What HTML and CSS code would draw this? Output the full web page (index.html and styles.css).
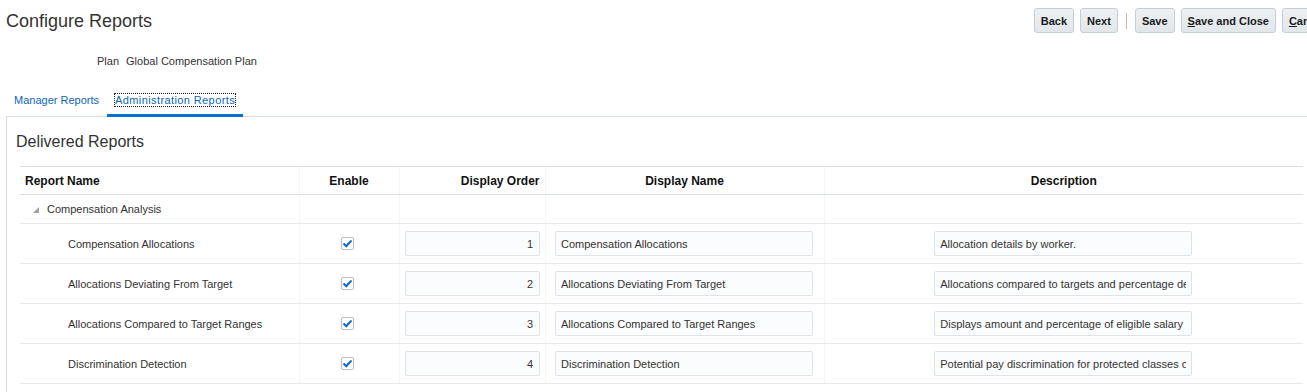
FILE: index.html
```html
<!DOCTYPE html>
<html lang="en">
<head>
    <meta charset="UTF-8">
    <title>Configure Reports</title>
    <link rel="stylesheet" href="styles.css">
</head>
<body>
    <div class="page-header">
        <h1 class="title">Configure Reports</h1>
        <div class="toolbar">
            <button class="btn">Back</button>
            <button class="btn">Next</button>
            <span class="separator"></span>
            <button class="btn">Save</button>
            <button class="btn"><u>S</u>ave and Close</button>
            <button class="btn"><u>C</u>ancel</button>
        </div>
    </div>

    <div class="plan-row">
        <span class="label">Plan</span>
        <span>Global Compensation Plan</span>
    </div>

    <div class="tabs">
        <a href="#" class="tab">Manager Reports</a>
        <a href="#" class="tab active"><span class="focus">Administration Reports</span></a>
    </div>

    <div class="panel">
        <h2 class="panel-title">Delivered Reports</h2>
        <table class="reports">
            <colgroup>
                <col class="col-name">
                <col class="col-enable">
                <col class="col-order">
                <col class="col-display">
                <col class="col-desc">
            </colgroup>
            <thead>
                <tr>
                    <th class="left">Report Name</th>
                    <th>Enable</th>
                    <th class="right">Display Order</th>
                    <th>Display Name</th>
                    <th>Description</th>
                </tr>
            </thead>
            <tbody>
                <tr class="group">
                    <td><span class="toggle"><svg width="6" height="6" viewBox="0 0 6 6"><polygon points="6,0 6,6 0,6" fill="#a0a0a0"/></svg></span>Compensation Analysis</td>
                    <td></td><td></td><td></td><td></td>
                </tr>
                <tr>
                    <td class="name">Compensation Allocations</td>
                    <td class="center"><span class="check"><svg width="11" height="11" viewBox="0 0 11 11"><polyline points="1.5,5.5 4.2,8.2 9.5,2.5" fill="none" stroke="#0b6fc8" stroke-width="2"/></svg></span></td>
                    <td class="center"><input class="field num" type="text" value="1"></td>
                    <td class="center"><input class="field" type="text" value="Compensation Allocations"></td>
                    <td class="center"><input class="field" type="text" value="Allocation details by worker."></td>
                </tr>
                <tr>
                    <td class="name">Allocations Deviating From Target</td>
                    <td class="center"><span class="check"><svg width="11" height="11" viewBox="0 0 11 11"><polyline points="1.5,5.5 4.2,8.2 9.5,2.5" fill="none" stroke="#0b6fc8" stroke-width="2"/></svg></span></td>
                    <td class="center"><input class="field num" type="text" value="2"></td>
                    <td class="center"><input class="field" type="text" value="Allocations Deviating From Target"></td>
                    <td class="center"><input class="field" type="text" value="Allocations compared to targets and percentage deviation from target."></td>
                </tr>
                <tr>
                    <td class="name">Allocations Compared to Target Ranges</td>
                    <td class="center"><span class="check"><svg width="11" height="11" viewBox="0 0 11 11"><polyline points="1.5,5.5 4.2,8.2 9.5,2.5" fill="none" stroke="#0b6fc8" stroke-width="2"/></svg></span></td>
                    <td class="center"><input class="field num" type="text" value="3"></td>
                    <td class="center"><input class="field" type="text" value="Allocations Compared to Target Ranges"></td>
                    <td class="center"><input class="field" type="text" value="Displays amount and percentage of eligible salary allocated."></td>
                </tr>
                <tr>
                    <td class="name">Discrimination Detection</td>
                    <td class="center"><span class="check"><svg width="11" height="11" viewBox="0 0 11 11"><polyline points="1.5,5.5 4.2,8.2 9.5,2.5" fill="none" stroke="#0b6fc8" stroke-width="2"/></svg></span></td>
                    <td class="center"><input class="field num" type="text" value="4"></td>
                    <td class="center"><input class="field" type="text" value="Discrimination Detection"></td>
                    <td class="center"><input class="field" type="text" value="Potential pay discrimination for protected classes of workers."></td>
                </tr>
            </tbody>
        </table>
    </div>
</body>
</html>
```

FILE: styles.css
```css
html, body {
    overflow: hidden;
}

body {
    margin: 0;
    font-family: "Liberation Sans", Arial, sans-serif;
    font-size: 11px;
    color: #333;
    background: #fff;
}

.page-header {
    display: flex;
    align-items: flex-start;
    padding: 8px 0 0 6px;
}

.title {
    margin: 3px 0 0;
    font-size: 18px;
    line-height: 20px;
    font-weight: normal;
    color: #333;
}

.toolbar {
    display: flex;
    align-items: center;
    gap: 6px;
    margin-left: auto;
    margin-right: -25px;
}

.btn {
    height: 25px;
    padding: 0 6px;
    font-family: "Liberation Sans", Arial, sans-serif;
    font-size: 11px;
    font-weight: bold;
    color: #1a1a1a;
    background: linear-gradient(#eef1f3, #e1e6e9);
    border: 1px solid #c4ced7;
    border-radius: 3px;
}

.separator {
    width: 1px;
    height: 16px;
    margin: 0 2px;
    background: #c6bfa8;
}

.plan-row {
    display: flex;
    gap: 7px;
    padding-left: 97px;
    margin-top: 22px;
    line-height: 13px;
}

.tabs {
    display: flex;
    margin-top: 26px;
    margin-bottom: -1px;
    padding-left: 6px;
    position: relative;
}

.tab {
    padding: 0 8px 7px;
    line-height: 13px;
    color: #0b66b8;
    text-decoration: none;
    border-bottom: 3px solid transparent;
}

.tab.active {
    border-bottom-color: #0572ce;
    letter-spacing: 0.4px;
}

.focus {
    outline: 1px dotted #222;
}

.panel {
    margin-left: 6px;
    border-top: 1px solid #d6dfe6;
    border-left: 1px solid #d6dfe6;
    padding: 15px 0 20px 9px;
}

.panel-title {
    margin: 0 0 14px;
    font-size: 16px;
    line-height: 20px;
    font-weight: normal;
    color: #333;
}

.reports {
    margin-left: 4px;
    width: 1283px;
    table-layout: fixed;
    border-collapse: collapse;
}

.col-name { width: 279px; }
.col-enable { width: 100px; }
.col-order { width: 146px; }
.col-display { width: 279px; }
.col-desc { width: 479px; }

.reports th {
    height: 27px;
    padding: 0 5px;
    font-size: 12px;
    font-weight: bold;
    color: #111;
    text-align: center;
    border-top: 1px solid #d9e0e6;
    border-bottom: 1px solid #d9e0e6;
    border-left: 1px solid #f4f6f7;
}

.reports th:first-child,
.reports td:first-child {
    border-left: none;
}

.reports th.left { text-align: left; }
.reports th.right { text-align: right; }

.reports td {
    height: 39px;
    padding: 0;
    border-bottom: 1px solid #e6e9ec;
    border-left: 1px solid #f6f7f8;
    vertical-align: middle;
}

.reports tr.group td {
    height: 28px;
}

.toggle {
    display: inline-block;
    margin: 0 8px 0 13px;
}

.reports td.name {
    padding-left: 48px;
}

.reports td.center {
    text-align: center;
}

.check {
    display: inline-flex;
    align-items: center;
    justify-content: center;
    width: 13px;
    height: 13px;
    box-sizing: border-box;
    border: 1px solid #b7bfc7;
    border-radius: 2px;
    background: #fff;
    vertical-align: middle;
    margin-left: -4px;
}

.field {
    box-sizing: border-box;
    width: 258px;
    height: 25px;
    padding: 0 5px;
    font-family: "Liberation Sans", Arial, sans-serif;
    font-size: 11px;
    color: #333;
    background: #fbfcfd;
    border: 1px solid #dde3e8;
    border-radius: 2px;
    vertical-align: middle;
    margin-left: -1px;
}

.field.num {
    width: 135px;
    padding-right: 6px;
    text-align: right;
    margin-left: 1px;
}
```
